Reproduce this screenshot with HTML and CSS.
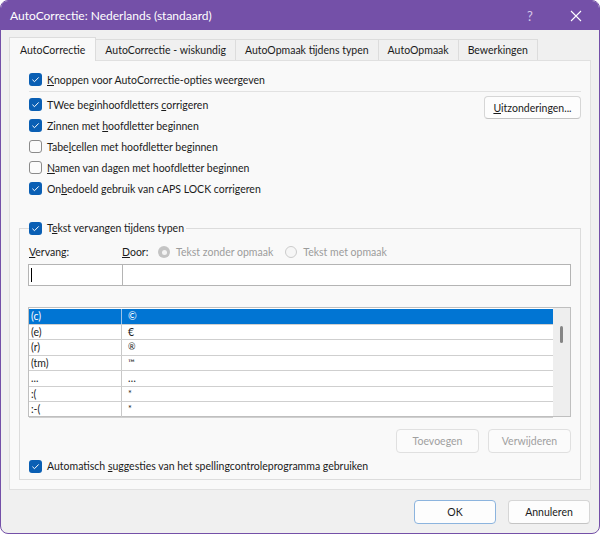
FILE: index.html
```html
<!DOCTYPE html>
<html lang="nl">
<head>
    <meta charset="UTF-8">
    <title>AutoCorrectie: Nederlands (standaard)</title>
    <link rel="stylesheet" href="styles.css">
</head>
<body>
<div class="window">
    <div class="titlebar">
        <span class="title">AutoCorrectie: Nederlands (standaard)</span>
        <span class="help">?</span>
        <span class="close">
            <svg width="12" height="12" viewBox="0 0 12 12"><path d="M1 1 L11 11 M11 1 L1 11" stroke="#fff" stroke-width="1.1" fill="none"/></svg>
        </span>
    </div>
    <div class="content">
        <div class="tabs">
            <div class="tab active">AutoCorrectie</div>
            <div class="tab">AutoCorrectie - wiskundig</div>
            <div class="tab">AutoOpmaak tijdens typen</div>
            <div class="tab">AutoOpmaak</div>
            <div class="tab">Bewerkingen</div>
        </div>
        <div class="panel">
            <div class="check-row first">
                <span class="cb on"><svg viewBox="0 0 13 13"><path d="M3.4 6.7 L5.5 8.7 L9.7 4.4"/></svg></span>
                <span><u>K</u>noppen voor AutoCorrectie-opties weergeven</span>
            </div>
            <div class="sep"></div>
            <div class="options">
                <div class="option-list">
                    <div class="check-row">
                        <span class="cb on"><svg viewBox="0 0 13 13"><path d="M3.4 6.7 L5.5 8.7 L9.7 4.4"/></svg></span>
                        <span>TWee beginhoofdletters <u>c</u>orrigeren</span>
                    </div>
                    <div class="check-row">
                        <span class="cb on"><svg viewBox="0 0 13 13"><path d="M3.4 6.7 L5.5 8.7 L9.7 4.4"/></svg></span>
                        <span>Zinnen met <u>h</u>oofdletter beginnen</span>
                    </div>
                    <div class="check-row">
                        <span class="cb off"></span>
                        <span>Tabe<u>l</u>cellen met hoofdletter beginnen</span>
                    </div>
                    <div class="check-row">
                        <span class="cb off"></span>
                        <span><u>N</u>amen van dagen met hoofdletter beginnen</span>
                    </div>
                    <div class="check-row">
                        <span class="cb on"><svg viewBox="0 0 13 13"><path d="M3.4 6.7 L5.5 8.7 L9.7 4.4"/></svg></span>
                        <span>On<u>b</u>edoeld gebruik van cAPS LOCK corrigeren</span>
                    </div>
                </div>
                <button class="btn exceptions"><u>U</u>itzonderingen...</button>
            </div>

            <fieldset class="group">
                <legend class="check-row legend">
                    <span class="cb on"><svg viewBox="0 0 13 13"><path d="M3.4 6.7 L5.5 8.7 L9.7 4.4"/></svg></span>
                    <span>T<u>e</u>kst vervangen tijdens typen</span>
                </legend>
                <div class="labels">
                    <span class="lbl-replace"><u>V</u>ervang:</span>
                    <span class="lbl-with"><u>D</u>oor:</span>
                    <span class="radio selected"></span>
                    <span class="disabled">Tekst zonder opmaak</span>
                    <span class="radio second"></span>
                    <span class="disabled">Tekst met opmaak</span>
                </div>
                <div class="fields">
                    <div class="field replace"><span class="caret"></span></div>
                    <div class="field with"></div>
                </div>
                <div class="list">
                    <div class="rows">
                        <div class="row selected"><span class="c1">(c)</span><span class="c2">©</span></div>
                        <div class="row"><span class="c1">(e)</span><span class="c2">€</span></div>
                        <div class="row"><span class="c1">(r)</span><span class="c2 small">®</span></div>
                        <div class="row"><span class="c1">(tm)</span><span class="c2 small">™</span></div>
                        <div class="row"><span class="c1">...</span><span class="c2">…</span></div>
                        <div class="row"><span class="c1">:(</span><span class="c2 small">*</span></div>
                        <div class="row"><span class="c1">:-(</span><span class="c2 small">*</span></div>
                    </div>
                    <div class="scrollbar"><span class="thumb"></span></div>
                </div>
                <div class="list-buttons">
                    <button class="btn" disabled>Toevoegen</button>
                    <button class="btn" disabled>Verwijderen</button>
                </div>
                <div class="check-row auto">
                    <span class="cb on"><svg viewBox="0 0 13 13"><path d="M3.4 6.7 L5.5 8.7 L9.7 4.4"/></svg></span>
                    <span>Automatisch <u>s</u>uggesties van het spellingcontroleprogramma gebruiken</span>
                </div>
            </fieldset>
        </div>
        <div class="footer">
            <button class="btn default">OK</button>
            <button class="btn">Annuleren</button>
        </div>
    </div>
</div>
</body>
</html>
```

FILE: styles.css
```css
body {
    margin: 0;
    background: #ffffff;
    font-family: Lato, "Noto Sans", sans-serif;
    font-size: 10.5px;
    color: #1b1b1b;
}
.window {
    width: 600px;
    height: 534px;
    box-sizing: border-box;
    border: 1px solid #7450a8;
    border-radius: 8px;
    background: #f0f0f0;
    overflow: hidden;
    display: flex;
    flex-direction: column;
}
.titlebar {
    height: 29px;
    flex-shrink: 0;
    background: #7450a8;
    color: #fff;
    display: flex;
    align-items: center;
    padding-left: 9px;
    font-size: 12px;
}
.title {
    flex: 1;
}
.help {
    width: 46px;
    text-align: center;
    font-size: 13px;
    color: #d6c9e8;
}
.close {
    width: 46px;
    display: flex;
    justify-content: center;
}
.content {
    flex: 1;
    padding: 7px 8px 0;
    display: flex;
    flex-direction: column;
}
.tabs {
    display: flex;
    align-items: flex-end;
    height: 23px;
    padding-left: 1px;
}
.tab {
    height: 20px;
    line-height: 20px;
    padding: 0 9px;
    white-space: nowrap;
    border: 1px solid #dcdcdc;
    border-bottom: none;
    margin-left: -1px;
    background: #f0f0f0;
}
.tab.active {
    height: 23px;
    line-height: 24px;
    padding: 0 10px;
    background: #f9f9f9;
    margin-bottom: -1px;
    position: relative;
    z-index: 1;
}
.panel {
    height: 430px;
    box-sizing: border-box;
    border: 1px solid #e0e0e0;
    background: #f9f9f9;
    padding: 8px 9px 0 9px;
}
.check-row {
    display: flex;
    align-items: center;
    gap: 5px;
    height: 21px;
    white-space: nowrap;
}
.check-row.first {
    padding-left: 10px;
}
.cb {
    width: 13px;
    height: 13px;
    box-sizing: border-box;
    border-radius: 3px;
    flex-shrink: 0;
    display: flex;
}
.cb.on {
    background: #0a5fb4;
}
.cb.on svg {
    width: 13px;
    height: 13px;
}
.cb.on path {
    stroke: #fff;
    stroke-width: 1;
    fill: none;
}
.cb.off {
    border: 1px solid #8b8b8b;
    background: #fbfbfb;
}
.sep {
    height: 1px;
    background: #e2e2e2;
    margin: 1px 0 2px 10px;
}
.options {
    display: flex;
    justify-content: space-between;
    align-items: flex-start;
    padding-left: 10px;
}
.btn {
    font-family: inherit;
    font-size: 10.5px;
    color: #1b1b1b;
    height: 24px;
    width: 83px;
    box-sizing: border-box;
    background: #fdfdfd;
    border: 1px solid #d6d6d6;
    border-bottom-color: #c4c4c4;
    border-radius: 4px;
    padding: 0;
    white-space: nowrap;
}
.btn:disabled {
    color: #a0a0a0;
    background: #fbfbfb;
    border-color: #e0e0e0;
}
.btn.exceptions {
    width: 97px;
    margin-top: 2px;
    height: 23px;
}
.group {
    margin: 21px 0 0 0;
    padding: 0 9px 5px 9px;
    border: 1px solid #dcdcdc;
    min-width: 0;
}
.legend {
    padding: 0 2px 0 0;
    height: 16px;
}
.labels {
    display: flex;
    align-items: center;
    height: 16px;
    margin-top: 8px;
    white-space: nowrap;
}
.lbl-replace {
    width: 93px;
}
.lbl-with {
    width: 36px;
}
.disabled {
    color: #9c9c9c;
}
.radio {
    width: 12px;
    height: 12px;
    border-radius: 50%;
    box-sizing: border-box;
    margin-right: 6px;
    display: flex;
    align-items: center;
    justify-content: center;
}
.radio.selected {
    background: #c4c4c4;
}
.radio.selected::after {
    content: "";
    width: 5px;
    height: 5px;
    border-radius: 50%;
    background: #f4f4f4;
}
.radio.second {
    border: 1px solid #cbcbcb;
    background: #f6f6f6;
    margin-left: 12px;
}
.fields {
    display: flex;
    margin: 4px 0 0 -1px;
}
.field {
    height: 22px;
    box-sizing: border-box;
    background: #fff;
    border: 1px solid #b4b4b4;
    display: flex;
    align-items: center;
}
.field.replace {
    width: 95px;
}
.field.with {
    flex: 1;
    margin-left: -1px;
}
.caret {
    width: 1px;
    height: 14px;
    background: #000;
    margin-left: 2px;
}
.list {
    display: flex;
    height: 110px;
    box-sizing: border-box;
    margin: 21px 0 0 -1px;
    border: 1px solid #bfbfbf;
    background: #fff;
}
.rows {
    flex: 1;
    padding-top: 1px;
}
.row {
    display: flex;
    height: 14.5px;
    line-height: 14px;
    border-bottom: 1px solid #cfcfcf;
}
.row.selected {
    background: #0175d3;
    color: #fff;
}
.c1 {
    width: 90px;
    padding-left: 2px;
    border-right: 1px solid #c8c8c8;
}
.row.selected .c1 {
    border-right-color: #9cc3e8;
}
.c2 {
    padding-left: 6px;
}
.c2.small {
    font-size: 9px;
}
.scrollbar {
    width: 17px;
    background: #eeeeee;
    position: relative;
}
.thumb {
    position: absolute;
    left: 7px;
    top: 18px;
    width: 3px;
    height: 17px;
    border-radius: 2px;
    background: #858585;
}
.list-buttons {
    display: flex;
    justify-content: flex-end;
    gap: 9px;
    margin-top: 12px;
}
.check-row.auto {
    height: 16px;
    margin-top: 5px;
    padding-left: 0;
}
.footer {
    display: flex;
    justify-content: flex-end;
    gap: 12px;
    padding: 10px 1px 0 0;
}
.footer .btn {
    width: 82px;
}
.btn.default {
    border-color: #8cb4de;
}
```
